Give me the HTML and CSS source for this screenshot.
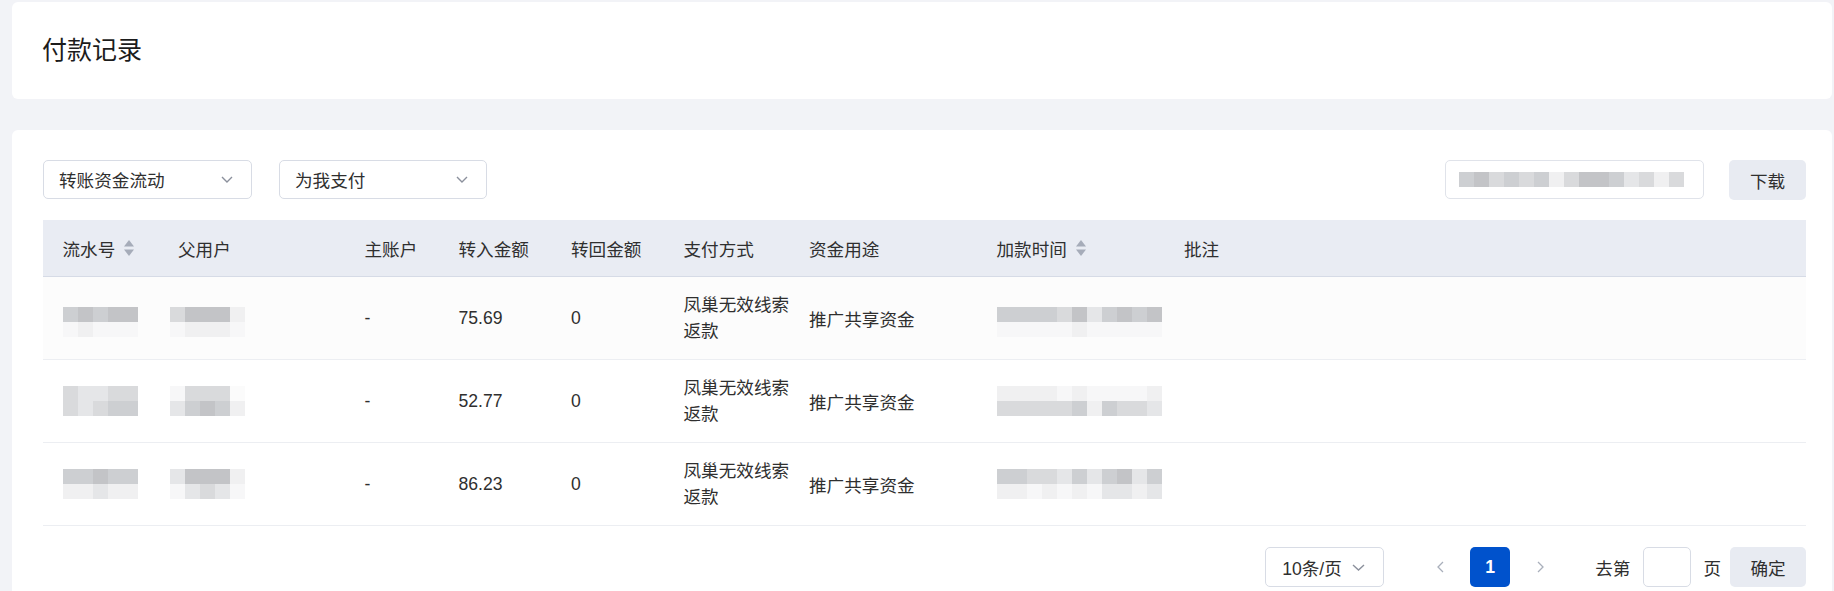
FILE: index.html
```html
<!DOCTYPE html>
<html lang="zh-CN">
<head>
<meta charset="utf-8">
<title>付款记录</title>
<link rel="stylesheet" href="styles.css">
</head>
<body>
<div class="page">
  <div class="head-card">
    <h1 class="title">付款记录</h1>
  </div>

  <div class="main-card">
    <div class="toolbar">
      <div class="select sel-1">
        <span>转账资金流动</span>
        <svg class="chev" width="12" height="7" viewBox="0 0 12 7"><polyline points="1,1 6,6 11,1" fill="none" stroke="#8b909c" stroke-width="1.4"/></svg>
      </div>
      <div class="select sel-2">
        <span>为我支付</span>
        <svg class="chev" width="12" height="7" viewBox="0 0 12 7"><polyline points="1,1 6,6 11,1" fill="none" stroke="#8b909c" stroke-width="1.4"/></svg>
      </div>
      <div class="spacer"></div>
      <div class="search">
        <div class="mosaic m15">
          <span class="k2"></span><span class="k1"></span><span class="k3"></span><span class="k2"></span><span class="k3"></span><span class="k2"></span><span class="k5"></span><span class="k3"></span><span class="k1"></span><span class="k1"></span><span class="k2"></span><span class="k4"></span><span class="k3"></span><span class="k5"></span><span class="k3"></span>
        </div>
      </div>
      <button class="btn btn-download">下载</button>
    </div>

    <div class="table">
      <div class="tr thead">
        <div class="td"><span>流水号</span><svg class="sort" width="10" height="16" viewBox="0 0 10 16"><polygon points="5,0 10,6.5 0,6.5" fill="#a6acb9"/><polygon points="0,9.5 10,9.5 5,16" fill="#a6acb9"/></svg></div>
        <div class="td">父用户</div>
        <div class="td">主账户</div>
        <div class="td">转入金额</div>
        <div class="td">转回金额</div>
        <div class="td">支付方式</div>
        <div class="td">资金用途</div>
        <div class="td"><span>加款时间</span><svg class="sort" width="10" height="16" viewBox="0 0 10 16"><polygon points="5,0 10,6.5 0,6.5" fill="#a6acb9"/><polygon points="0,9.5 10,9.5 5,16" fill="#a6acb9"/></svg></div>
        <div class="td">批注</div>
      </div>

      <div class="tr row row-hover">
        <div class="td"><div class="mosaic m5 up"><span class="k2"></span><span class="k1"></span><span class="k2"></span><span class="k1"></span><span class="k1"></span><span class="k6"></span><span class="k5"></span><span class="k6"></span><span class="k6"></span><span class="k6"></span></div></div>
        <div class="td"><div class="mosaic m5 shift up"><span class="k3"></span><span class="k1"></span><span class="k1"></span><span class="k1"></span><span class="k5"></span><span class="k6"></span><span class="k5"></span><span class="k5"></span><span class="k5"></span><span class="k6"></span></div></div>
        <div class="td">-</div>
        <div class="td">75.69</div>
        <div class="td">0</div>
        <div class="td wrap">凤巢无效线索返款</div>
        <div class="td">推广共享资金</div>
        <div class="td"><div class="mosaic m11 up"><span class="k2"></span><span class="k2"></span><span class="k2"></span><span class="k2"></span><span class="k3"></span><span class="k1"></span><span class="k4"></span><span class="k2"></span><span class="k1"></span><span class="k2"></span><span class="k1"></span><span class="k6"></span><span class="k6"></span><span class="k6"></span><span class="k6"></span><span class="k6"></span><span class="k5"></span><span class="k6"></span><span class="k6"></span><span class="k6"></span><span class="k6"></span><span class="k6"></span></div></div>
        <div class="td"></div>
      </div>

      <div class="tr row">
        <div class="td"><div class="mosaic m5"><span class="k3"></span><span class="k4"></span><span class="k4"></span><span class="k3"></span><span class="k3"></span><span class="k3"></span><span class="k4"></span><span class="k3"></span><span class="k2"></span><span class="k2"></span></div></div>
        <div class="td"><div class="mosaic m5 shift"><span class="k6"></span><span class="k3"></span><span class="k3"></span><span class="k3"></span><span class="k7"></span><span class="k4"></span><span class="k2"></span><span class="k1"></span><span class="k2"></span><span class="k5"></span></div></div>
        <div class="td">-</div>
        <div class="td">52.77</div>
        <div class="td">0</div>
        <div class="td wrap">凤巢无效线索返款</div>
        <div class="td">推广共享资金</div>
        <div class="td"><div class="mosaic m11"><span class="k5"></span><span class="k5"></span><span class="k5"></span><span class="k5"></span><span class="k6"></span><span class="k5"></span><span class="k6"></span><span class="k6"></span><span class="k6"></span><span class="k6"></span><span class="k5"></span><span class="k3"></span><span class="k3"></span><span class="k3"></span><span class="k3"></span><span class="k3"></span><span class="k2"></span><span class="k5"></span><span class="k2"></span><span class="k3"></span><span class="k3"></span><span class="k4"></span></div></div>
        <div class="td"></div>
      </div>

      <div class="tr row">
        <div class="td"><div class="mosaic m5"><span class="k2"></span><span class="k2"></span><span class="k1"></span><span class="k2"></span><span class="k2"></span><span class="k5"></span><span class="k5"></span><span class="k4"></span><span class="k5"></span><span class="k5"></span></div></div>
        <div class="td"><div class="mosaic m5 shift"><span class="k4"></span><span class="k1"></span><span class="k1"></span><span class="k1"></span><span class="k5"></span><span class="k6"></span><span class="k4"></span><span class="k3"></span><span class="k4"></span><span class="k6"></span></div></div>
        <div class="td">-</div>
        <div class="td">86.23</div>
        <div class="td">0</div>
        <div class="td wrap">凤巢无效线索返款</div>
        <div class="td">推广共享资金</div>
        <div class="td"><div class="mosaic m11"><span class="k2"></span><span class="k2"></span><span class="k3"></span><span class="k3"></span><span class="k4"></span><span class="k2"></span><span class="k4"></span><span class="k2"></span><span class="k1"></span><span class="k4"></span><span class="k2"></span><span class="k5"></span><span class="k5"></span><span class="k6"></span><span class="k5"></span><span class="k6"></span><span class="k5"></span><span class="k6"></span><span class="k4"></span><span class="k4"></span><span class="k5"></span><span class="k4"></span></div></div>
        <div class="td"></div>
      </div>
    </div>

    <div class="pager">
      <div class="select page-size">
        <span>10条/页</span>
        <svg class="chev" width="13" height="7" viewBox="0 0 13 7"><polyline points="1,1 6.5,6 12,1" fill="none" stroke="#8b909c" stroke-width="1.4"/></svg>
      </div>
      <button class="arrow prev" aria-label="上一页"><svg width="7" height="12" viewBox="0 0 7 12"><polyline points="6,1 1,6 6,11" fill="none" stroke="#a9afbb" stroke-width="1.3"/></svg></button>
      <button class="page-num active">1</button>
      <button class="arrow next" aria-label="下一页"><svg width="7" height="12" viewBox="0 0 7 12"><polyline points="1,1 6,6 1,11" fill="none" stroke="#a9afbb" stroke-width="1.3"/></svg></button>
      <span class="jump-label">去第</span>
      <div class="jump-input"></div>
      <span class="jump-unit">页</span>
      <button class="btn btn-ok">确定</button>
    </div>
  </div>
</div>
</body>
</html>
```

FILE: styles.css
```css
* { box-sizing: border-box; }

html, body {
  margin: 0;
  padding: 0;
  background: #f2f3f7;
  overflow: hidden;
}

body {
  font-family: "Liberation Sans", Arial, "Noto Sans CJK SC", sans-serif;
  font-size: 17.6px;
  color: #2f2f2f;
}

.page {
  padding: 2px 2px 0 12px;
}

.head-card {
  height: 97px;
  background: #fff;
  border-radius: 6px;
  display: flex;
  align-items: center;
  padding: 0 30px;
}

.title {
  margin: 0;
  font-size: 25px;
  font-weight: normal;
  color: #1c1c1c;
  line-height: 1;
}

.main-card {
  margin-top: 31px;
  background: #fff;
  border-radius: 6px 6px 0 0;
  padding: 30px 26px 20px 31px;
}

/* toolbar */
.toolbar {
  display: flex;
  align-items: flex-start;
  height: 40px;
}

.select {
  height: 39px;
  border: 1px solid #d8dce5;
  border-radius: 5px;
  display: flex;
  align-items: center;
  justify-content: space-between;
  padding: 0 18px 0 15px;
  background: #fff;
  color: #2f2f2f;
}

.sel-1 { width: 209px; }
.sel-2 { width: 208px; margin-left: 27px; }

.chev { flex: none; }

.spacer { flex: 1; }

.search {
  width: 259px;
  height: 39px;
  border: 1px solid #e0e3ea;
  border-radius: 5px;
  display: flex;
  align-items: center;
  padding-left: 13px;
}

.btn {
  font: inherit;
  color: #2f2f2f;
  border: none;
  background: #e8ebf2;
  border-radius: 5px;
  height: 40px;
  padding: 0;
  cursor: pointer;
}

.btn-download {
  width: 77px;
  margin-left: 25px;
}

/* mosaic (blurred content) */
.mosaic {
  display: grid;
  grid-auto-rows: 15px;
}
.m5 { grid-template-columns: repeat(5, 15px); }
.m11 { grid-template-columns: repeat(11, 15px); }
.m15 { grid-template-columns: repeat(15, 15px); grid-auto-rows: 15px; }
.shift { margin-left: -8px; }
.up { margin-top: 8px; }

.k1 { background: #c3c4c7; }
.k2 { background: #cdcfd2; }
.k3 { background: #d9dadc; }
.k4 { background: #e5e6e8; }
.k5 { background: #f0f0f1; }
.k6 { background: #f7f7f8; }
.k7 { background: #fbfbfb; }

/* table */
.table {
  margin-top: 20px;
}

.tr {
  display: grid;
  grid-template-columns: 115.5px 186.5px 94px 112.5px 112.5px 125.5px 187.5px 187.5px 1fr;
}

.td {
  display: flex;
  align-items: center;
  padding-left: 19.5px;
  padding-right: 0;
  min-width: 0;
}

.thead {
  height: 57px;
  background: #e9ecf3;
  border-bottom: 1px solid #d6dbe6;
}

.sort {
  margin-left: 9px;
  flex: none;
}

.row {
  height: 83px;
  border-bottom: 1px solid #eceef2;
  background: #fff;
}

.row-hover {
  background: #fcfcfc;
}

.wrap {
  line-height: 26.5px;
}

/* pager */
.pager {
  margin-top: 21px;
  display: flex;
  justify-content: flex-end;
  align-items: center;
  height: 40px;
}

.page-size {
  width: 119px;
  height: 40px;
  padding: 0 18px 0 16px;
}

.arrow {
  width: 32px;
  height: 40px;
  border: none;
  background: transparent;
  padding: 0;
  display: flex;
  align-items: center;
  justify-content: center;
}

.prev { margin-left: 40px; }
.next { margin-left: 14px; }

.page-num {
  font: inherit;
  width: 40px;
  height: 40px;
  margin-left: 14px;
  border: none;
  border-radius: 5px;
  padding: 0;
}

.page-num.active {
  background: #0052cc;
  color: #fff;
  font-weight: bold;
}

.jump-label { margin-left: 39px; }

.jump-input {
  width: 48px;
  height: 40px;
  margin-left: 13px;
  border: 1px solid #d8dce5;
  border-radius: 5px;
  background: #fff;
}

.jump-unit { margin-left: 12px; }

.btn-ok {
  width: 76px;
  margin-left: 9px;
}
```
